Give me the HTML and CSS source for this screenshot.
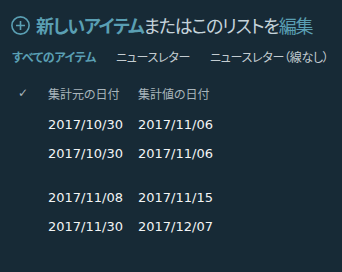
FILE: index.html
```html
<!DOCTYPE html>
<html lang="ja">
<head>
<meta charset="utf-8">
<link rel="stylesheet" href="styles.css">
</head>
<body>
<div class="page">
  <div class="title">
    <svg class="plus" width="19" height="19" viewBox="0 0 19 19">
      <circle cx="9.5" cy="9.5" r="8.6" fill="none" stroke="#5a9fb3" stroke-width="1.6"/>
      <path d="M9.5 5v9M5 9.5h9" stroke="#5a9fb3" stroke-width="1.6"/>
    </svg>
    <span class="t-strong">新しいアイテム</span><span class="t-light">またはこのリストを</span><span class="t-edit">編集</span>
  </div>
  <div class="tabs">
    <span class="tab active">すべてのアイテム</span>
    <span class="tab">ニュースレター</span>
    <span class="tab">ニュースレター（線なし）</span>
  </div>
  <div class="table">
    <div class="row head">
      <span class="check">✓</span>
      <span class="c1">集計元の日付</span>
      <span class="c2">集計値の日付</span>
    </div>
    <div class="row"><span class="check"></span><span class="c1">2017/10/30</span><span class="c2">2017/11/06</span></div>
    <div class="row"><span class="check"></span><span class="c1">2017/10/30</span><span class="c2">2017/11/06</span></div>
    <div class="row gap"><span class="check"></span><span class="c1">2017/11/08</span><span class="c2">2017/11/15</span></div>
    <div class="row"><span class="check"></span><span class="c1">2017/11/30</span><span class="c2">2017/12/07</span></div>
  </div>
</div>
</body>
</html>
```
FILE: styles.css
```css
html, body {
  margin: 0;
  padding: 0;
  background: #172a36;
}
.page {
  width: 342px;
  height: 272px;
  background: #172a36;
  padding: 14px 0 0 11px;
  box-sizing: border-box;
  font-family: "Noto Sans CJK JP", sans-serif;
  white-space: nowrap;
  overflow: hidden;
}
.title {
  display: flex;
  align-items: center;
  height: 22px;
  font-size: 18px;
  font-feature-settings: "palt";
  letter-spacing: -1.2px;
}
.title span, .tabs span {
  flex: none;
}
.plus {
  margin-right: 6px;
  flex: none;
}
.t-strong {
  color: #5a9fb3;
  font-weight: 700;
}
.t-light {
  color: #c5d3db;
  font-weight: 400;
}
.t-edit {
  color: #5a9fb3;
}
.tabs {
  display: flex;
  gap: 20px;
  margin-top: 11px;
  margin-left: 1px;
  font-size: 12px;
  font-feature-settings: "palt";
  letter-spacing: -0.3px;
  height: 18px;
  align-items: center;
}
.tab {
  color: #c3ccd1;
}
.tab.active {
  color: #5a9fb3;
  font-weight: 700;
}
.table {
  margin-top: 18px;
}
.row {
  display: flex;
  align-items: center;
  height: 29px;
  font-family: "DejaVu Sans", sans-serif;
  font-size: 13px;
  color: #f2f4f5;
}
.row.head {
  height: 20px;
  margin-bottom: 7px;
  font-family: "Noto Sans CJK JP", sans-serif;
  font-feature-settings: "palt";
  font-size: 12px;
  color: #a9b5bc;
}
.row.gap {
  margin-top: 15px;
}
.check {
  width: 37px;
  padding-left: 7px;
  box-sizing: border-box;
  font-family: "DejaVu Sans", sans-serif;
  font-size: 12px;
  color: #a9b5bc;
}
.c1 {
  width: 90px;
}
```
